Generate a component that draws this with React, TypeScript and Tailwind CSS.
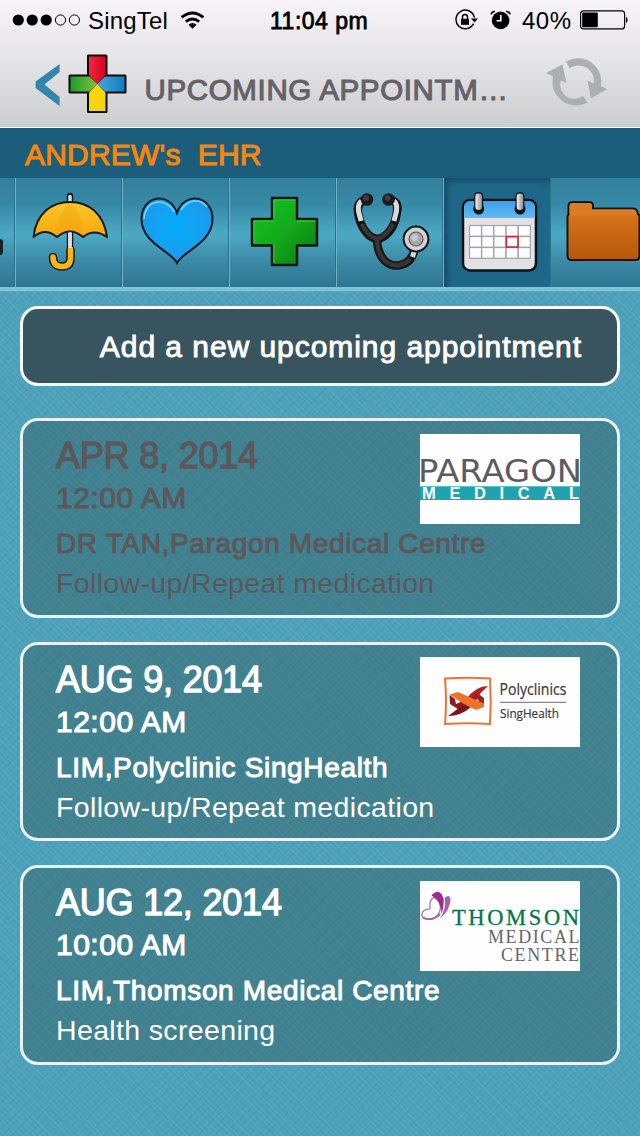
import React, { useState } from "react";

function StatusBar() {
  return (
    <div className="h-10 w-full flex items-center text-black text-[23px] leading-none">
      <div className="w-[270px] h-10 flex items-center pl-3">
        <svg width="70" height="14" viewBox="0 0 70 14">
          <circle cx="6.3" cy="7" r="5.6" />
          <circle cx="20.2" cy="7" r="5.6" />
          <circle cx="34.2" cy="7" r="5.6" />
          <circle cx="48.5" cy="7" r="5.1" fill="none" stroke="#000" strokeWidth="1" />
          <circle cx="62.4" cy="7" r="5.1" fill="none" stroke="#000" strokeWidth="1" />
        </svg>
        <span className="ml-1.5 mt-0.5 text-[24px] tracking-[0.2px]">SingTel</span>
        <svg className="ml-3 mt-px" width="25" height="19" viewBox="0 0 26 20" fill="none" stroke="#000" strokeWidth="3">
          <path d="M1.5 6.8 Q13 -2.6 24.5 6.8" />
          <path d="M6 11.2 Q13 5.6 20 11.2" />
          <path d="M13 18.6 L8.8 14.4 Q13 11 17.2 14.4 Z" fill="#000" stroke="none" />
        </svg>
      </div>
      <div className="w-[184px] mt-0.5 text-[23px] tracking-[0.5px] [-webkit-text-stroke:0.8px]">11:04 pm</div>
      <svg width="24" height="22" viewBox="0 0 24 22" fill="none" stroke="#000" strokeWidth="1.4">
        <path d="M19.6 14.6 A9.3 9.3 0 1 1 20.4 8.6" />
        <path d="M17 9.6 H24 L20.5 13.4 Z" fill="#000" stroke="none" />
        <rect x="7" y="9.8" width="8" height="6" fill="#000" stroke="none" />
        <path d="M8.5 10 V8 A2.5 2.5 0 0 1 13.5 8 V10" />
      </svg>
      <svg className="ml-3" width="22" height="20" viewBox="0 0 22 20">
        <circle cx="10.6" cy="10.4" r="8.8" />
        <path d="M1 4.4 Q1.6 1.8 5 1.2 M20.2 4.4 Q19.6 1.8 16.2 1.2" fill="none" stroke="#000" strokeWidth="1.6" />
        <path d="M10.8 5 V10.8 H6.6" fill="none" stroke="#fff" strokeWidth="1.6" />
      </svg>
      <span className="ml-2.5 mt-0.5 w-[51px] text-[24px] tracking-[0.5px]">40%</span>
      <svg className="ml-[7px]" width="50" height="20" viewBox="0 0 50 20">
        <rect x="0.6" y="0.9" width="44" height="18" rx="3" fill="none" stroke="#000" strokeWidth="1.2" />
        <rect x="2.2" y="2.5" width="15.6" height="14.8" rx="1" />
        <path d="M46 6.5 Q49.4 9.9 46 13.3 Z" />
      </svg>
    </div>
  );
}

function Header() {
  return (
    <div className="h-[87px] flex items-start">
      <svg className="ml-[35px] mt-[23px]" width="25" height="44" viewBox="0 0 25 44">
        <path d="M24.6 1 V9 L9.5 21.6 L24.6 34 V43 L0.6 25 V18.6 Z" fill="#3285ad" />
      </svg>
      <svg className="ml-2 mt-[13.5px]" width="59" height="60" viewBox="0 0 59 60">
        <defs>
          <linearGradient id="lr" x1="0" x2="1"><stop stopColor="#ee2a3c" /><stop offset="1" stopColor="#d90022" /></linearGradient>
          <linearGradient id="lg" x1="0" x2="1"><stop stopColor="#239b2b" /><stop offset="1" stopColor="#7cc242" /></linearGradient>
          <linearGradient id="lb" x1="0" x2="1"><stop stopColor="#49a5dc" /><stop offset="1" stopColor="#0e7fc0" /></linearGradient>
        </defs>
        <path d="M20 0.5 H38 Q39.500 0.5 39.500 2 V20.500 H57 Q58.500 20.500 58.500 22 V38 Q58.500 39.500 57 39.500 H39.500 V57.500 Q39.500 59 38 59 H20.500 Q19 59 19 57.500 V39.500 H2 Q0.500 39.500 0.500 38 V22 Q0.500 20.500 2 20.500 H19 V2 Q19 0.5 20 0.5Z" fill="#0b0b0b" />
        <path d="M21 2.500 H37.500 V21 L29.300 30 L21 21Z" fill="url(#lr)" />
        <path d="M2.500 22.500 H21.500 L29.300 30 L21.500 37.500 H2.500Z" fill="url(#lg)" />
        <path d="M56.500 22.500 H37 L29.300 30 L37 37.500 H56.500Z" fill="url(#lb)" />
        <path d="M21 57 H37.500 V38.500 L29.300 30 L21 38.500Z" fill="#f5d50c" />
      </svg>
      <h1 className="ml-[17.500px] mt-[34px] w-[380.500px] text-[29.5px] leading-8 tracking-[0.65px] text-[#656367] whitespace-nowrap [-webkit-text-stroke:1.1px]">
        UPCOMING APPOINTM…
      </h1>
      <svg className="ml-[21px] mt-[17px]" width="62" height="52" viewBox="0 0 62 52" fill="#acaeb0">
        <path d="M20 4.500 Q34 -2.500 46 6 Q57 15 55 29 L61 32 L45 41.500 L41.500 23.500 L47.500 26.500 Q49 16 41 11 Q33 6 23.500 11 Z" />
        <path d="M41.500 45.500 Q29 52 17 44.500 Q4 35 7 19.500 L0 16 L16.500 7.500 L20.500 26 L14.500 23.500 Q12.500 34 21 40 Q29 44.500 37 39 Z" />
      </svg>
    </div>
  );
}

function Umbrella() {
  return (
    <svg width="107" height="109" viewBox="0 0 107 109">
      <defs>
        <linearGradient id="um" x1="0" x2="0" y1="0" y2="1"><stop stopColor="#fcc62b" /><stop offset="1" stopColor="#f7a80c" /></linearGradient>
      </defs>
      <path d="M54 18 V86" stroke="#17191b" strokeWidth="6.500" strokeLinecap="round" />
      <path d="M54 18.500 V72" stroke="#e0e0e3" strokeWidth="3.500" strokeLinecap="round" />
      <path d="M54.500 72 V81 Q54 88.500 46 88.500 Q37 88.500 37 79" fill="none" stroke="#17191b" strokeWidth="8.500" strokeLinecap="round" />
      <path d="M54.500 71 V81 Q54 88.500 46 88.500 Q37 88.500 37 79" fill="none" stroke="#f8b616" strokeWidth="5.500" strokeLinecap="round" />
      <path d="M17.500 59 C20 35 36 24 54 24 C73 24 88 36 91 59 Q78 50 67 59 Q54 48 41 59 Q29 49 17.500 59Z" fill="url(#um)" stroke="#17191b" strokeWidth="2" strokeLinejoin="round" />
      <path d="M54 25 Q42 34 41 57 Q54 47 67 57 Q66 34 54 25Z" fill="#e99d08" opacity=".3" />
      <path d="M54 54.500 V70" stroke="#e0e0e3" strokeWidth="3.500" />
    </svg>
  );
}

function Heart() {
  return (
    <svg width="107" height="109" viewBox="0 0 107 109">
      <defs>
        <radialGradient id="he" cx=".5" cy=".45" r=".6"><stop stopColor="#03adfa" /><stop offset=".6" stopColor="#16a0f2" /><stop offset="1" stopColor="#2592e3" /></radialGradient>
      </defs>
      <path d="M54 85 C48 73 18.500 65 18.500 41 C18.500 18 46 12 54 35 C62 12 89.500 18 89.500 41 C89.500 65 60 73 54 85Z" fill="url(#he)" stroke="#141c22" strokeWidth="2" />
      <path d="M21 41 C22 21 43 19 51.500 34 M58 32 C65 21 77 20 84 29" fill="none" stroke="#65d0fb" strokeWidth="1.800" />
    </svg>
  );
}

function GreenCross() {
  return (
    <svg width="107" height="109" viewBox="0 0 107 109">
      <defs>
        <linearGradient id="gc" x1="0" x2="1" y1="0" y2="1"><stop stopColor="#12c41c" /><stop offset=".5" stopColor="#14aa1c" /><stop offset="1" stopColor="#087a12" /></linearGradient>
      </defs>
      <path d="M42 20 H67 V41 H87 V67.500 H67 V87 H42 V67.500 H22 V41 H42Z" fill="url(#gc)" stroke="#10180f" strokeWidth="2.500" strokeLinejoin="round" />
      <path d="M43.800 66 V85 M43.800 40 V22 H65.500 M24 65 V43 H44 M67 43 H85.500" fill="none" stroke="#3fd044" strokeWidth="1" />
    </svg>
  );
}

function Stethoscope() {
  return (
    <svg width="107" height="109" viewBox="0 0 107 109">
      <g fill="none" stroke="#131415" strokeLinecap="round" strokeLinejoin="round" strokeWidth="8.500">
        <path d="M28 22 Q20 24 21 34 C23 50 32 60 40 61 C49 60 58 50 60 34 Q62 24 54 22" />
        <path d="M40 62 C41 82 52 88 61 87.500 Q74 86 77.500 72" />
      </g>
      <path d="M24.500 23 Q20.500 26 21.500 33 L24 43 M57 23 Q60.500 26 59.500 33 L57 43" fill="none" stroke="#dadadd" strokeWidth="5" />
      <path d="M25 46 Q30 58 40 61 Q50 58 56 46 M40 62 C41 82 52 87.500 61 87.500 Q69 86 73 81" fill="none" stroke="#3a3332" strokeWidth="4.500" />
      <path d="M75.500 79 L77.500 72" stroke="#dadadd" strokeWidth="5" />
      <circle cx="30" cy="21.500" r="6.300" fill="#1b1919" />
      <circle cx="51.500" cy="21.500" r="6.300" fill="#1b1919" />
      <circle cx="29" cy="20" r="3" fill="#413c3b" />
      <circle cx="50.500" cy="20" r="3" fill="#413c3b" />
      <circle cx="79" cy="61" r="12.400" fill="#d2d1d3" stroke="#131415" strokeWidth="2" />
      <circle cx="79" cy="61" r="7" fill="#aaa8aa" stroke="#5d5b5d" strokeWidth="1.200" />
      <circle cx="77.500" cy="59.500" r="3.500" fill="#c6c5c8" />
    </svg>
  );
}

function Calendar() {
  return (
    <svg width="107" height="109" viewBox="0 0 107 109">
      <defs>
        <linearGradient id="ca" x1="0" x2="0" y1="0" y2="1"><stop stopColor="#3f9fe6" /><stop offset="1" stopColor="#5bbcf5" /></linearGradient>
        <linearGradient id="ri" x1="0" x2="1"><stop stopColor="#f4f4f5" /><stop offset="1" stopColor="#8b8a8e" /></linearGradient>
      </defs>
      <rect x="19" y="22" width="73" height="70.500" rx="7" fill="#e2e1e5" stroke="#0d1216" strokeWidth="2.500" />
      <path d="M20.200 40 V29 Q20.200 23 27 23 H84 Q90.800 23 90.800 29 V40Z" fill="url(#ca)" />
      {[34.7, 76].map((x) => (
        <g key={x}>
          <circle cx={x} cy="31" r="5.500" fill="#10161c" />
          <rect x={x - 4.5} y="14" width="9" height="19" rx="4.500" fill="#10161c" />
          <rect x={x - 3.3} y="15.500" width="6.600" height="16.500" rx="3.300" fill="url(#ri)" />
        </g>
      ))}
      {[0, 1, 2].map((r) =>
        [0, 1, 2, 3, 4].map((c) => (
          <rect key={`${r}${c}`} x={25.5 + c * 12.2} y={47.5 + r * 11} width="12" height="10.800" fill="#fdfdfd" stroke="#a3a2a6" strokeWidth="1.200" />
        ))
      )}
      <rect x="62.400" y="58.700" width="11.600" height="10.400" fill="#fff" stroke="#d32c32" strokeWidth="1.700" />
    </svg>
  );
}

function Folder() {
  return (
    <svg width="107" height="109" viewBox="0 0 107 109">
      <defs>
        <linearGradient id="fo" x1="0" x2="0" y1="0" y2="1"><stop stopColor="#d77519" /><stop offset="1" stopColor="#b4560e" /></linearGradient>
      </defs>
      <path d="M17.500 38 V28 Q17.500 24 22 24 H38 Q42 24 42 28 V30.500 H82 Q87 30.500 87 38Z" fill="#dc7c28" stroke="#1b130b" strokeWidth="2" />
      <path d="M16.500 39 Q16.500 35.500 20 35.500 H85 Q88.500 35.500 88.500 39 V78 Q88.500 82 84.500 82 H20.500 Q16.500 82 16.500 78Z" fill="url(#fo)" stroke="#1b130b" strokeWidth="2" />
      <path d="M18.500 37.500 V28 Q18.500 25 22 25 H38 Q41 25 41 28 V31.500 H82 Q86 31.500 86 37.500Z" fill="#dc7c28" />
    </svg>
  );
}

function ParagonLogo() {
  return (
    <svg width="160" height="90" viewBox="0 0 160 90">
      <rect width="160" height="90" fill="#fefefe" />
      <rect y="52.300" width="160" height="13.700" fill="#1fa3af" />
      <text x="-2" y="47.800" textLength="164" lengthAdjust="spacingAndGlyphs" fontFamily="DejaVu Sans, sans-serif" fontSize="32" fill="#5c5b60">PARAGON</text>
      <text x="2" y="65.300" textLength="157" fontFamily="Liberation Sans, sans-serif" fontSize="16.500" fontWeight="700" fill="#fff">MEDICAL</text>
    </svg>
  );
}

function PolyclinicsLogo() {
  return (
    <svg width="160" height="90" viewBox="0 0 160 90">
      <rect width="160" height="90" fill="#fefefe" />
      <path d="M25 21.500 Q48 20 70 21.500 Q71.500 44 70 67 Q48 65.500 25 67 Q27 44 25 21.500Z" fill="none" stroke="#ea7435" strokeWidth="2" />
      <path d="M28 59 Q36 54 43 46.500 L51 50 Q41 59 28 59Z" fill="#7d1417" />
      <path d="M46 42 Q56 29 68 29 Q61 35 56 42 L53 46Z" fill="#b52022" />
      <path d="M29.500 38 L35 42 L36 47 L45 43 L49 46 L38 52 L30 47Z" fill="#8e1a1c" />
      <path d="M52 39 L58 36.500 L64 41 V47 L59 45 L58 42 L54 44Z" fill="#a51e22" />
      <path d="M29.500 37.500 L38 35 L64 46.500 V50 L56 53 L44 47Z" fill="#ef7326" />
      <text x="79.500" y="38" textLength="67" lengthAdjust="spacingAndGlyphs" fontFamily="Open Sans, sans-serif" fontSize="15.500" fill="#3a3639" stroke="#3a3639" strokeWidth=".2">Polyclinics</text>
      <path d="M80 45.300 H146" stroke="#6d6a70" strokeWidth="1" />
      <text x="80" y="61.300" textLength="59" lengthAdjust="spacingAndGlyphs" fontFamily="Open Sans, sans-serif" fontSize="13.500" fill="#3a3639" stroke="#3a3639" strokeWidth=".2">SingHealth</text>
    </svg>
  );
}

function ThomsonLogo() {
  return (
    <svg width="160" height="90" viewBox="0 0 160 90">
      <rect width="160" height="90" fill="#fefefe" />
      <path d="M10 28 Q9 18 14 16.500 Q20 17 20.500 26 Q20 35 12 38 Q3 39.500 1.800 34 Q2 28 10 28" fill="none" stroke="#b57bc0" strokeWidth="1.400" />
      <path d="M11.500 14.500 Q17 8 21.500 13 Q26 19 21.500 33 Q21 19 11.500 14.500Z" fill="#9c2d8f" />
      <path d="M24.500 17 Q29.500 12.500 30.500 18 Q30.500 29 19.500 38 Q27 27 24.500 17Z" fill="#a461b1" />
      <path d="M3 36.500 Q12 41 20 33" fill="none" stroke="#a461b1" strokeWidth="1.800" />
      <g fontFamily="Liberation Serif, serif">
        <text x="32" y="44" textLength="127" fontSize="22.500" fill="#06764a" stroke="#06764a" strokeWidth=".3">THOMSON</text>
        <text x="68" y="62" textLength="91.500" fontSize="18" fill="#67656a">MEDICAL</text>
        <text x="81" y="79.500" textLength="78" fontSize="18" fill="#67656a">CENTRE</text>
      </g>
    </svg>
  );
}

const tabs = [
  { name: "umbrella", icon: <Umbrella /> },
  { name: "heart", icon: <Heart /> },
  { name: "cross", icon: <GreenCross /> },
  { name: "stethoscope", icon: <Stethoscope /> },
  { name: "calendar", icon: <Calendar /> },
  { name: "folder", icon: <Folder /> },
];

const appointments = [
  { date: "APR 8, 2014", time: "12:00 AM", doctor: "DR TAN,Paragon Medical Centre", reason: "Follow-up/Repeat medication", past: true, logo: <ParagonLogo /> },
  { date: "AUG 9, 2014", time: "12:00 AM", doctor: "LIM,Polyclinic SingHealth", reason: "Follow-up/Repeat medication", past: false, logo: <PolyclinicsLogo /> },
  { date: "AUG 12, 2014", time: "10:00 AM", doctor: "LIM,Thomson Medical Centre", reason: "Health screening", past: false, logo: <ThomsonLogo /> },
];

export default function App() {
  const [active, setActive] = useState("calendar");

  return (
    <div
      className={`w-[640px] h-[1136px] overflow-hidden flex flex-col bg-[#4da2ba] bg-[repeating-linear-gradient(45deg,#ffffff0d_0_1px,transparent_1px_4px),repeating-linear-gradient(-45deg,#0050700d_0_2px,transparent_2px_6px)] font-['Liberation_Sans',Arial,sans-serif]`}>
      {/* top bar */}
      <div className="h-32 shrink-0 bg-linear-to-b from-[#f6f4f8] via-[#e4e3e6] to-[#cccdcf] border-b border-white">
        <StatusBar />
        <Header />
      </div>

      {/* patient */}
      <div className="h-[50px] shrink-0 bg-[#1b5d7b] pl-[25px] pt-[9px] text-[30px] leading-9 tracking-[0.2px] text-[#f5860f] whitespace-pre [-webkit-text-stroke:1.1px]">
        {"ANDREW's  EHR"}
      </div>

      {/* tabs */}
      <div className="h-[109px] shrink-0 flex overflow-hidden bg-[linear-gradient(180deg,#337f9b_0%,#378aa7_25%,#4ca9c4_52%,#3c8ba7_75%,#2d7693_100%)]">
        <div className="w-4 shrink-0 h-full flex items-center border-r border-[#72b3c8] shadow-[inset_-1px_0_0_#2a6f8b]">
          <div className="w-[3px] h-4 mt-7 rounded-r-full bg-[#1c2022]" />
        </div>
        {tabs.map((t) => (
          <button
            key={t.name}
            onClick={() => setActive(t.name)}
            className={`w-[107px] h-[109px] shrink-0 border-r ${
              active === t.name
                ? "bg-[#1f6788] border-[#2d7490] shadow-[inset_4px_4px_5px_#164f6d,inset_-4px_-3px_5px_#1f6b8b]"
                : "border-[#72b3c8] shadow-[inset_-1px_0_0_#2a6f8b]"
            }`}>
            {t.icon}
          </button>
        ))}
      </div>
      <div className="h-[5px] shrink-0 bg-[#7ec3d3] border-b border-[#5aa9be]" />

      {/* appointments */}
      <div className="px-5 pt-3.5 flex flex-col">
        <button className="h-20 rounded-[18px] border-[3px] border-[#f8fbfd] bg-[#38545f] pr-[35px] pt-0.5 text-right text-[30px] leading-8 tracking-[0.95px] text-white [-webkit-text-stroke:0.9px]">
          Add a new upcoming appointment
        </button>

        <div className="mt-8 flex flex-col gap-6">
          {appointments.map((a) => (
            <div
              key={a.date}
              className={`h-[199.5px] rounded-[18px] border-[3.5px] border-[#e9f2f8] bg-[#366167]/50 pl-[33px] pr-[37px] flex justify-between ${
                a.past ? "text-[#5b585c]" : "text-white"
              }`}>
              <div className="w-0 pt-[13px] whitespace-nowrap">
                <p className="h-[43px] text-[36px] leading-[44px] tracking-[-0.2px] [-webkit-text-stroke:1.3px]">{a.date}</p>
                <p className="h-[44px] text-[30px] leading-[42px] tracking-[0.5px] [-webkit-text-stroke:1.1px]">{a.time}</p>
                <p className="h-[42px] text-[28px] leading-[45px] tracking-[0.65px] [-webkit-text-stroke:1px]">{a.doctor}</p>
                <p className="h-[38px] text-[28.5px] leading-[40px] tracking-[0.35px]">{a.reason}</p>
              </div>
              <div className="w-40 h-[90px] mt-[12.5px] shrink-0">{a.logo}</div>
            </div>
          ))}
        </div>
      </div>
    </div>
  );
}
